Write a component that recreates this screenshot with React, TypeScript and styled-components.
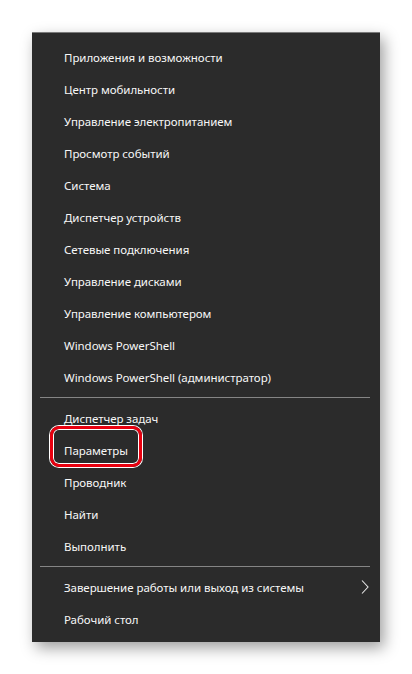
import styled, { createGlobalStyle } from "styled-components"

const GlobalStyle = createGlobalStyle`
  html, body {
    margin: 0;
    padding: 0;
    background: #fff;
  }
`

const Page = styled.div`
  width: 412px;
  height: 674px;
  padding: 32px 0 0 32px;
  box-sizing: border-box;
`

const Menu = styled.div`
  width: 348px;
  height: 610px;
  box-sizing: border-box;
  background: #2b2b2b;
  border-top: 1px solid #7a7a7a;
  padding: 8px 0 7px;
  box-shadow: 4px 6px 14px rgba(0, 0, 0, 0.38);
  font-family: "Noto Sans", "Open Sans", sans-serif;
  font-size: 11.5px;
  letter-spacing: -0.05px;
  color: #f7f7f7;
`

const Item = styled.div`
  position: relative;
  display: flex;
  align-items: center;
  justify-content: space-between;
  height: 32px;
  padding: 0 11px 0 32px;
  cursor: default;
  white-space: nowrap;
`

const Mark = styled.span`
  position: absolute;
  left: 18px;
  top: -8px;
  width: 92px;
  height: 41px;
  box-sizing: border-box;
  border: 3px solid #e8000f;
  border-radius: 9px;
  box-shadow: 0 0 0 1px #fff, inset 0 0 0 1px #fff;
  pointer-events: none;
`

const Separator = styled.div`
  height: 1px;
  margin: 4px 10px 4px 8px;
  background: #858585;
`

const Chevron = () => (
  <svg width="8" height="14" viewBox="0 0 8 14" fill="none">
    <path d="M1 0.5 L7 7 L1 13.5" stroke="#e8e8e8" strokeWidth="1.1" />
  </svg>
)

const topItems = [
  "Приложения и возможности",
  "Центр мобильности",
  "Управление электропитанием",
  "Просмотр событий",
  "Система",
  "Диспетчер устройств",
  "Сетевые подключения",
  "Управление дисками",
  "Управление компьютером",
  "Windows PowerShell",
  "Windows PowerShell (администратор)",
]

const middleItems = ["Диспетчер задач", "Параметры", "Проводник", "Найти", "Выполнить"]

const App = () => (
  <>
    <GlobalStyle />
    <Page>
      <Menu>
        {topItems.map((t) => (
          <Item key={t}>{t}</Item>
        ))}
        <Separator />
        {middleItems.map((t) => (
          <Item key={t}>
            {t === "Параметры" && <Mark />}
            {t}
          </Item>
        ))}
        <Separator />
        <Item>
          Завершение работы или выход из системы
          <Chevron />
        </Item>
        <Item>Рабочий стол</Item>
      </Menu>
    </Page>
  </>
)

export default App
